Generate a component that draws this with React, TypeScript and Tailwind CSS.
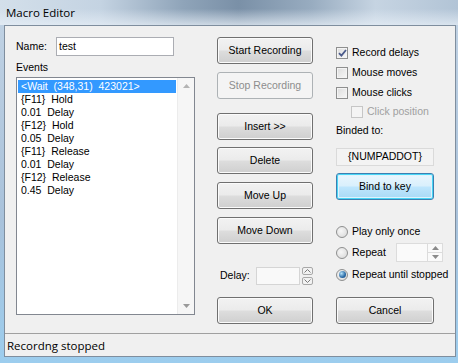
import type { ReactNode } from "react";

const events = [
  "<Wait  (348,31)  423021>",
  "{F11}  Hold",
  "0.01  Delay",
  "{F12}  Hold",
  "0.05  Delay",
  "{F11}  Release",
  "0.01  Delay",
  "{F12}  Release",
  "0.45  Delay",
];

function WinButton({
  children,
  className = "",
  disabled,
  focused,
}: {
  children: ReactNode;
  className?: string;
  disabled?: boolean;
  focused?: boolean;
}) {
  let look =
    "border-[#707070] bg-[linear-gradient(180deg,#f2f2f2_0%,#ebebeb_48%,#dddddd_52%,#cfcfcf_100%)] text-black shadow-[inset_0_0_0_1px_#fbfbfb]";
  if (disabled) look = "border-[#adb2b5] bg-[#f4f4f4] text-[#8d8d8d]";
  if (focused)
    look =
      "border-[#3c7fb1] bg-[linear-gradient(180deg,#eaf6fd_0%,#d9f0fc_48%,#bee6fd_52%,#a7d9f5_100%)] text-black shadow-[inset_0_0_0_1px_#48d5f5,inset_0_0_0_2px_#dff3fc]";
  return (
    <div
      className={`flex h-[27px] items-center justify-center whitespace-nowrap rounded-[3px] border ${look} ${className}`}
    >
      {children}
    </div>
  );
}

function CheckBox({ checked, disabled }: { checked?: boolean; disabled?: boolean }) {
  return (
    <div
      className={`flex h-[12px] w-[12px] shrink-0 items-center justify-center border ${
        disabled
          ? "border-[#c6c6c6] bg-[#f4f4f4]"
          : "border-[#8e8f8f] bg-[linear-gradient(135deg,#dcdcdc,#f8f8f8)] shadow-[inset_0_0_0_1px_#f4f4f4]"
      }`}
    >
      {checked ? (
        <svg width="9" height="8" viewBox="0 0 9 8">
          <path d="M1 4.2 L3.4 6.6 L8 1" fill="none" stroke="#4b5b8b" strokeWidth="1.8" />
        </svg>
      ) : null}
    </div>
  );
}

function Radio({ checked }: { checked?: boolean }) {
  return (
    <div className="flex h-[12px] w-[12px] shrink-0 items-center justify-center rounded-full border border-[#8e8f8f] bg-[radial-gradient(circle_at_40%_40%,#f7f7f7,#d6d6d6)]">
      {checked ? (
        <div className="h-[7px] w-[7px] rounded-full bg-[radial-gradient(circle_at_35%_35%,#b5e3fa,#2a6aa6_60%,#174a7e)]" />
      ) : null}
    </div>
  );
}

function Tri({ up, color = "#9a9a9a" }: { up?: boolean; color?: string }) {
  return (
    <svg width="7" height="4" viewBox="0 0 7 4">
      <path d={up ? "M0 4 L3.5 0 L7 4 Z" : "M0 0 L3.5 4 L7 0 Z"} fill={color} />
    </svg>
  );
}

export default function App() {
  return (
    <div className="flex h-[363px] w-[458px] flex-col overflow-hidden whitespace-nowrap bg-[linear-gradient(180deg,#c2d3e4_0%,#a9c2db_60%,#9ccdee_100%)] font-['Liberation_Sans',Arial,sans-serif] text-[10.5px] text-black">
      {/* title bar */}
      <div className="flex h-[25px] shrink-0 items-center bg-[linear-gradient(180deg,rgba(255,255,255,0)_35%,rgba(230,238,246,0.75)_100%),linear-gradient(90deg,#d3dfea_0%,#c4d3e2_22%,#8fa4b9_40%,#7a90a7_52%,#98acc0_68%,#c6d4e2_82%,#b2c4d6_100%)] pl-[6px]">
        <span className="font-['Open_Sans',sans-serif] text-[11.5px] text-black">Macro Editor</span>
      </div>

      <div className="flex flex-1 pl-[4px] pr-[2px] pb-[7px]">
        <div className="flex flex-1 flex-col border border-[#7f8e9e] bg-[#f0f0f0]">
          <div className="flex h-[307px] pl-[11px] pt-[11px]">
            {/* left column */}
            <div className="flex w-[179px] flex-col">
              <div className="flex h-[19px] items-center">
                <span className="w-[40px]">Name:</span>
                <div className="flex h-[19px] w-[118px] items-center border border-[#abadb3] bg-white pl-[2px]">
                  test
                </div>
              </div>
              <div className="mt-[5px] leading-[13px]">Events</div>
              <div className="mt-[3px] flex h-[238px] border border-[#828790] bg-white">
                <div className="flex flex-1 flex-col pt-[2px]">
                  {events.map((e, i) => (
                    <div
                      key={i}
                      className={`mx-[1px] h-[13px] whitespace-pre pl-[3px] leading-[13px] ${
                        i === 0 ? "bg-[#3399ff] text-white" : ""
                      }`}
                    >
                      {e}
                    </div>
                  ))}
                </div>
                <div className="flex w-[17px] flex-col items-center justify-between border-l border-[#ececec] bg-[#f6f6f6] py-[6px]">
                  <Tri up color="#b4b4b4" />
                  <Tri color="#9a9a9a" />
                </div>
              </div>
            </div>

            {/* middle column */}
            <div className="ml-[22px] flex w-[96px] flex-col">
              <WinButton>Start Recording</WinButton>
              <WinButton className="mt-[8px]" disabled>
                Stop Recording
              </WinButton>
              <WinButton className="mt-[14px]">Insert &gt;&gt;</WinButton>
              <WinButton className="mt-[7px]">Delete</WinButton>
              <WinButton className="mt-[8px]">Move Up</WinButton>
              <WinButton className="mt-[8px]">Move Down</WinButton>
              <div className="mt-[23px] flex h-[18px] items-center">
                <span className="w-[39px] shrink-0 pl-[3px]">Delay:</span>
                <div className="h-[18px] w-[44px] border border-[#d5d5d5] bg-[#f9f9f9]" />
                <div className="ml-[2px] flex h-[18px] w-[11px] flex-col justify-between">
                  <div className="flex h-[8px] items-center justify-center rounded-[2px] border border-[#a8a8a8] bg-[#f2f2f2]">
                    <svg width="7" height="4" viewBox="0 0 7 4">
                      <path d="M0.5 3.5 L3.5 0.5 L6.5 3.5" fill="none" stroke="#7a7a7a" strokeWidth="1" />
                    </svg>
                  </div>
                  <div className="flex h-[8px] items-center justify-center rounded-[2px] border border-[#a8a8a8] bg-[#f2f2f2]">
                    <svg width="7" height="4" viewBox="0 0 7 4">
                      <path d="M0.5 0.5 L3.5 3.5 L6.5 0.5" fill="none" stroke="#7a7a7a" strokeWidth="1" />
                    </svg>
                  </div>
                </div>
              </div>
              <WinButton className="mt-[12px]">OK</WinButton>
            </div>

            {/* right column */}
            <div className="ml-[23px] flex w-[107px] flex-col">
              <div className="mt-[6px] flex h-[20px] items-center gap-[4px]">
                <CheckBox checked />
                <span>Record delays</span>
              </div>
              <div className="flex h-[20px] items-center gap-[4px]">
                <CheckBox />
                <span>Mouse moves</span>
              </div>
              <div className="flex h-[19px] items-center gap-[4px]">
                <CheckBox />
                <span>Mouse clicks</span>
              </div>
              <div className="ml-[15px] flex h-[20px] items-center gap-[4px]">
                <CheckBox disabled />
                <span className="text-[#a0a0a0]">Click position</span>
              </div>
              <div className="mt-[2px] leading-[13px]">Binded to:</div>
              <div className="mt-[11px] flex h-[18px] w-[98px] items-center justify-center border border-[#dadada] bg-[#f3f3f3]">
                {"{NUMPADDOT}"}
              </div>
              <WinButton className="mt-[7px] w-[98px]" focused>
                Bind to key
              </WinButton>
              <div className="mt-[22px] flex h-[20px] items-center gap-[4px]">
                <Radio />
                <span>Play only once</span>
              </div>
              <div className="flex h-[21px] items-center gap-[4px]">
                <Radio />
                <span>Repeat</span>
                <div className="ml-auto flex h-[19px] w-[47px] border border-[#dcdcdc] bg-[#fafafa]">
                  <div className="flex-1" />
                  <div className="flex w-[15px] flex-col border-l border-[#dcdcdc]">
                    <div className="flex flex-1 items-center justify-center border-b border-[#dcdcdc]">
                      <Tri up color="#8a8a8a" />
                    </div>
                    <div className="flex flex-1 items-center justify-center">
                      <Tri color="#8a8a8a" />
                    </div>
                  </div>
                </div>
              </div>
              <div className="flex h-[23px] items-center gap-[4px]">
                <Radio checked />
                <span>Repeat until stopped</span>
              </div>
              <WinButton className="mt-[11px] w-[98px]">Cancel</WinButton>
            </div>
          </div>

          {/* status bar */}
          <div className="flex h-[23px] items-center border-t border-[#a0a0a0] pl-[2px] pt-[2px] font-['Open_Sans',sans-serif] text-[11.5px]">
            Recordng stopped
          </div>
        </div>
      </div>
    </div>
  );
}
